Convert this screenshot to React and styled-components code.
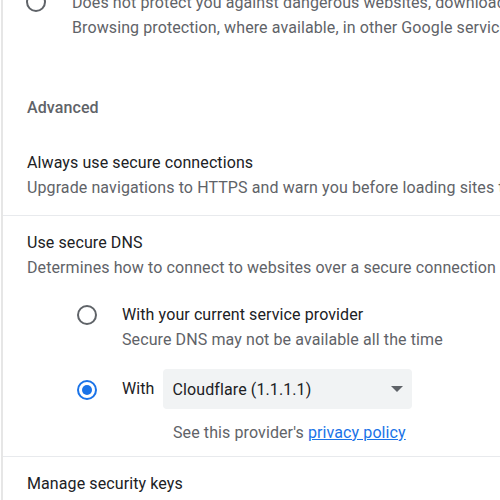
import React from "react"
import styled, { createGlobalStyle } from "styled-components"

const GlobalStyle = createGlobalStyle`
  html, body {
    margin: 0;
    padding: 0;
    background: #ffffff;
    overflow: hidden;
  }
  body {
    font-family: Roboto, "Noto Sans", Arial, sans-serif;
    font-size: 16px;
    letter-spacing: 0.1px;
    color: #202124;
  }
`

export default function App() {
  return (
    <>
      <GlobalStyle />
      <Card>
        <TopOption>
          <Radio />
          <div>
            <Secondary>Does not protect you against dangerous websites, downloads, and extensions. You’ll still get Safe</Secondary>
            <Secondary>Browsing protection, where available, in other Google services, like Gmail and Search.</Secondary>
          </div>
        </TopOption>

        <Heading>Advanced</Heading>

        <Row>
          <Primary>Always use secure connections</Primary>
          <Secondary>Upgrade navigations to HTTPS and warn you before loading sites that don’t support it</Secondary>
        </Row>

        <Row $divided>
          <Primary>Use secure DNS</Primary>
          <Secondary>Determines how to connect to websites over a secure connection</Secondary>
          <RadioGroup>
            <Option>
              <Radio />
              <div>
                <Primary>With your current service provider</Primary>
                <Secondary>Secure DNS may not be available all the time</Secondary>
              </div>
            </Option>
            <Option $center>
              <Radio $checked />
              <Primary>With</Primary>
              <Select>
                <span>Cloudflare (1.1.1.1)</span>
                <Caret />
              </Select>
            </Option>
            <Note>
              See this provider's <Link href="#">privacy policy</Link>
            </Note>
          </RadioGroup>
        </Row>

        <Row $divided>
          <Primary>Manage security keys</Primary>
        </Row>
      </Card>
    </>
  )
}

const Card = styled.main`
  margin-left: 1px;
  border-left: 2px solid #e6e6e6;
  min-height: 500px;
  display: flex;
  flex-direction: column;
  white-space: nowrap;
  overflow: hidden;
`

const Primary = styled.div`
  line-height: 24px;
  color: #202124;
`

const Secondary = styled.div`
  line-height: 24px;
  color: #5f6368;
  margin-top: 1px;
`

const TopOption = styled.div`
  display: flex;
  align-items: flex-start;
  gap: 26px;
  margin-top: -10px;
  padding-left: 23px;
`

const Heading = styled.h2`
  margin: 56px 0 0;
  padding-left: 24px;
  font-size: 16px;
  font-weight: 500;
  line-height: 24px;
  color: #5f6368;
`

const Row = styled.section`
  padding: 15px 0 ${(p) => (p.$divided ? "16px" : "15px")} 24px;
  margin-top: ${(p) => (p.$divided ? "0" : "16px")};
  border-top: ${(p) => (p.$divided ? "1px solid #e8eaed" : "none")};
`

const RadioGroup = styled.div`
  padding: 23px 0 0 50px;
  display: flex;
  flex-direction: column;
`

const Option = styled.div`
  display: flex;
  align-items: ${(p) => (p.$center ? "center" : "flex-start")};
  gap: 25px;
  margin-top: ${(p) => (p.$center ? "17px" : "0")};

  & > ${Primary} {
    margin-right: -17px;
  }
`

const Radio = styled.span`
  flex: none;
  box-sizing: border-box;
  width: 20px;
  height: 20px;
  margin-top: 2px;
  border-radius: 50%;
  border: 2px solid ${(p) => (p.$checked ? "#1a73e8" : "#5f6368")};
  display: flex;
  align-items: center;
  justify-content: center;

  &::after {
    content: "";
    display: ${(p) => (p.$checked ? "block" : "none")};
    width: 10px;
    height: 10px;
    border-radius: 50%;
    background: #1a73e8;
  }
`

const Select = styled.div`
  box-sizing: border-box;
  width: 249px;
  height: 40px;
  padding: 0 9px 0 10px;
  border-radius: 4px;
  background: #f1f3f4;
  display: flex;
  align-items: center;
  justify-content: space-between;
  color: #202124;
`

const Caret = styled.span`
  width: 0;
  height: 0;
  border-left: 6px solid transparent;
  border-right: 6px solid transparent;
  border-top: 6px solid #5f6368;
`

const Note = styled.div`
  margin: 12px 0 -5px 96px;
  line-height: 24px;
  color: #5f6368;
`

const Link = styled.a`
  color: #1a73e8;
  text-decoration: underline;
`
